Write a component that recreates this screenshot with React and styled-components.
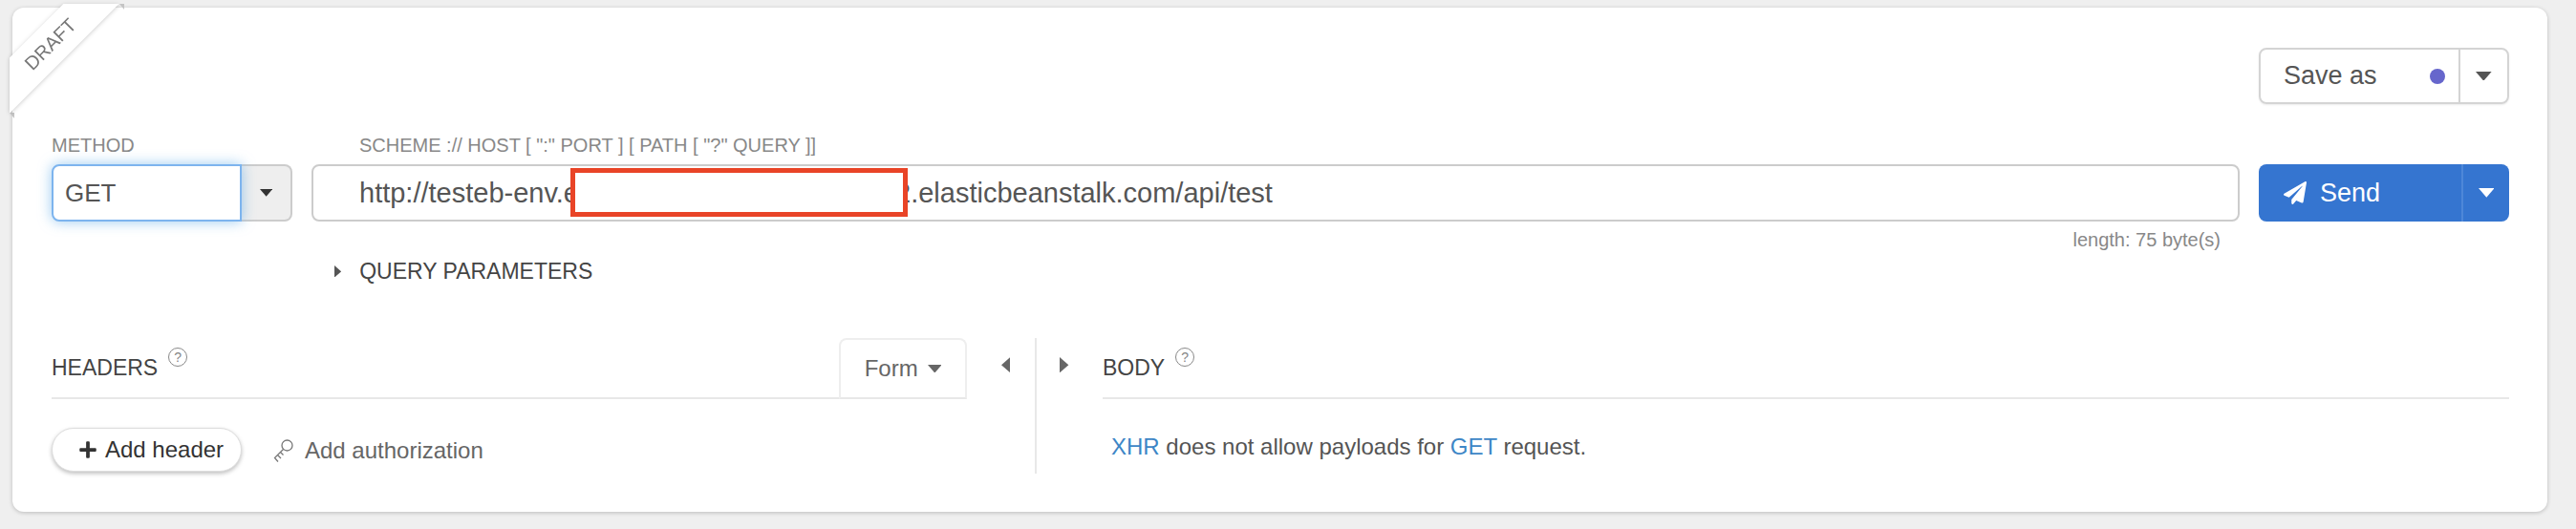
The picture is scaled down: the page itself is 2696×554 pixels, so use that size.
import React from "react";
import styled, { createGlobalStyle } from "styled-components";
import { FaPaperPlane, FaPlus } from "react-icons/fa";

const GlobalStyle = createGlobalStyle`
  html, body {
    margin: 0;
    padding: 0;
    background: #efefef;
    font-family: "Liberation Sans", Arial, sans-serif;
    color: #555;
  }
  * {
    box-sizing: border-box;
  }
`;

const Caret = ({ size = 12, color = "#555", dir = "down" }) => {
  const points = {
    down: "0,0 12,0 6,7",
    left: "8,0 8,14 0,7",
    right: "0,0 8,7 0,14",
  };
  const box = dir === "down" ? "0 0 12 7" : "0 0 8 14";
  const width = dir === "down" ? size * 1.33 : size * 0.72;
  const height = dir === "down" ? size * 0.78 : size * 1.26;
  return (
    <svg width={width} height={height} viewBox={box} style={{ display: "block" }}>
      <polygon points={points[dir]} fill={color} />
    </svg>
  );
};

const KeyIcon = () => (
  <svg width="21" height="25" viewBox="0 0 21 25" fill="none" stroke="#777" strokeWidth="1.3">
    <circle cx="14.5" cy="6.5" r="5.5" />
    <path d="M10.5 10.5 L1.5 19.5 L5 23.5 M4.5 16.5 L8 20 M7.5 13.5 L10.5 16.5" />
  </svg>
);

const HelpIcon = styled.span`
  display: inline-flex;
  align-items: center;
  justify-content: center;
  width: 20px;
  height: 20px;
  margin-left: 11px;
  border: 1px solid #888;
  border-radius: 50%;
  color: #888;
  font-size: 14px;
  line-height: 1;
  position: relative;
  top: -11px;
`;

const Page = styled.div`
  width: 2696px;
  height: 554px;
  padding: 8px 30px 18px 13px;
  overflow: hidden;
`;

const Card = styled.div`
  position: relative;
  height: 528px;
  padding: 42px 40px 0 41px;
  background: #fff;
  border-radius: 12px;
  box-shadow: 0 1px 4px rgba(0, 0, 0, 0.22);
`;

const Ribbon = styled.div`
  position: absolute;
  left: -3px;
  top: -4px;
  width: 122px;
  height: 122px;
  overflow: hidden;
  filter: drop-shadow(0 1px 2px rgba(0, 0, 0, 0.2));
`;

const RibbonBand = styled.div`
  position: absolute;
  left: -42px;
  top: 22px;
  width: 170px;
  height: 41px;
  background: #fff;
  transform: rotate(-45deg);
  display: flex;
  align-items: center;
  justify-content: center;
  font-size: 20px;
  color: #777;
`;

const RibbonFold = styled.div`
  position: absolute;
  left: ${(props) => props.$left}px;
  top: ${(props) => props.$top}px;
  width: 5px;
  height: 6px;
  background: #c4c4c4;
  clip-path: polygon(0 0, 100% 0, 100% 100%);
`;

const SaveRow = styled.div`
  display: flex;
  justify-content: flex-end;
  height: 59px;
`;

const SaveGroup = styled.div`
  display: flex;
  width: 262px;
  height: 59px;
  border: 2px solid #d4d4d4;
  border-radius: 8px;
  box-shadow: 0 1px 2px rgba(0, 0, 0, 0.08);
`;

const SaveMain = styled.div`
  flex: 1;
  display: flex;
  align-items: center;
  justify-content: space-between;
  padding: 0 14px 0 24px;
  font-size: 27px;
  color: #555;
  border-right: 2px solid #d4d4d4;
`;

const Dot = styled.span`
  width: 16px;
  height: 16px;
  border-radius: 50%;
  background: #6666cc;
`;

const SaveCaret = styled.div`
  width: 49px;
  display: flex;
  align-items: center;
  justify-content: center;
`;

const RequestGrid = styled.div`
  display: grid;
  grid-template-columns: 252px 1fr 262px;
  column-gap: 20px;
  margin-top: 33px;
`;

const FieldLabel = styled.div`
  height: 30px;
  font-size: 20px;
  line-height: 20px;
  color: #888;
  padding-left: ${(props) => props.$inset || 0}px;
`;

const MethodGroup = styled.div`
  display: flex;
  height: 60px;
`;

const MethodInput = styled.div`
  position: relative;
  width: 199px;
  display: flex;
  align-items: center;
  padding-left: 12px;
  font-size: 26px;
  color: #555;
  background: #fff;
  border: 2px solid #7db4ee;
  border-radius: 8px 0 0 8px;
  box-shadow: 0 0 14px rgba(102, 175, 233, 0.65);
`;

const MethodCaret = styled.div`
  flex: 1;
  display: flex;
  align-items: center;
  justify-content: center;
  background: #eee;
  border: 2px solid #ccc;
  border-left: 0;
  border-radius: 0 8px 8px 0;
`;

const UrlField = styled.div`
  position: relative;
  height: 60px;
  display: flex;
  align-items: center;
  padding-left: 48px;
  font-size: 29px;
  color: #555;
  border: 2px solid #ccc;
  border-radius: 8px;
  white-space: pre;
`;

const UrlGap = styled.span`
  display: inline-block;
  width: 331px;
`;

const Redaction = styled.div`
  position: absolute;
  left: 269px;
  top: 2px;
  width: 353px;
  height: 51px;
  background: #fff;
  border: 5px solid #e94427;
`;

const SendGroup = styled.div`
  display: flex;
  height: 60px;
  background: #3575d0;
  border-radius: 8px;
  color: #fff;
`;

const SendMain = styled.div`
  flex: 1;
  display: flex;
  align-items: center;
  gap: 14px;
  padding-left: 26px;
  font-size: 27px;
  border-right: 2px solid #4d87d8;
`;

const SendCaret = styled.div`
  width: 48px;
  display: flex;
  align-items: center;
  justify-content: center;
`;

const LengthNote = styled.div`
  grid-column: 2;
  text-align: right;
  padding: 8px 20px 0 0;
  height: 28px;
  font-size: 20px;
  line-height: 22px;
  color: #888;
`;

const QueryToggle = styled.div`
  display: flex;
  align-items: center;
  gap: 19px;
  height: 30px;
  margin: 9px 0 0 296px;
  font-size: 23px;
  color: #444;
`;

const Panels = styled.div`
  display: grid;
  grid-template-columns: 1031px 1fr;
  margin-top: 55px;
`;

const LeftPanel = styled.div`
  height: 142px;
  border-right: 2px solid #e8e8e8;
`;

const RightPanel = styled.div`
  display: grid;
  grid-template-columns: 69px 1fr;
`;

const PanelHead = styled.div`
  display: flex;
  align-items: stretch;
  height: 64px;
`;

const HeadTitle = styled.div`
  flex: 1;
  display: flex;
  align-items: center;
  font-size: 23px;
  color: #444;
  border-bottom: 2px solid #e8e8e8;
`;

const FormTab = styled.div`
  width: 134px;
  display: flex;
  align-items: center;
  justify-content: center;
  gap: 10px;
  font-size: 24px;
  color: #666;
  border: 2px solid #eee;
  border-bottom: 2px solid #e8e8e8;
  border-radius: 8px 8px 0 0;
`;

const CollapseSlot = styled.div`
  width: ${(props) => props.$width}px;
  display: flex;
  justify-content: center;
  padding: 20px 0 0 ${(props) => props.$shift || 0}px;
`;

const HeaderActions = styled.div`
  display: flex;
  align-items: center;
  gap: 33px;
  margin-top: 30px;
`;

const AddHeader = styled.div`
  display: flex;
  align-items: center;
  gap: 8px;
  width: 199px;
  height: 46px;
  padding-left: 27px;
  font-size: 24px;
  color: #333;
  background: #fff;
  border: 1px solid #ddd;
  border-radius: 23px;
  box-shadow: 0 2px 4px rgba(0, 0, 0, 0.25);
`;

const AddAuth = styled.div`
  display: flex;
  align-items: center;
  gap: 12px;
  padding-top: 2px;
  font-size: 24px;
  color: #666;
`;

const BodyNote = styled.div`
  margin: 36px 0 0 9px;
  font-size: 24px;
  line-height: 28px;
  color: #555;
`;

const Keyword = styled.span`
  color: #3d86c6;
`;

export default function App() {
  return (
    <>
      <GlobalStyle />
      <Page>
        <Card>
          <RibbonFold $left={112} $top={-4} />
          <RibbonFold $left={-3} $top={110} />
          <Ribbon>
            <RibbonBand>DRAFT</RibbonBand>
          </Ribbon>

          <SaveRow>
            <SaveGroup>
              <SaveMain>
                Save as
                <Dot />
              </SaveMain>
              <SaveCaret>
                <Caret size={12.5} />
              </SaveCaret>
            </SaveGroup>
          </SaveRow>

          <RequestGrid>
            <div>
              <FieldLabel>METHOD</FieldLabel>
              <MethodGroup>
                <MethodInput>GET</MethodInput>
                <MethodCaret>
                  <Caret size={10} color="#333" />
                </MethodCaret>
              </MethodGroup>
            </div>
            <div>
              <FieldLabel $inset={50}>SCHEME :// HOST [ ":" PORT ] [ PATH [ "?" QUERY ]]</FieldLabel>
              <UrlField>
                http://testeb-env.e
                <UrlGap />
                2.elasticbeanstalk.com/api/test
                <Redaction />
              </UrlField>
            </div>
            <div>
              <FieldLabel />
              <SendGroup>
                <SendMain>
                  <FaPaperPlane size={24} />
                  Send
                </SendMain>
                <SendCaret>
                  <Caret size={12.5} color="#fff" />
                </SendCaret>
              </SendGroup>
            </div>
            <LengthNote>length: 75 byte(s)</LengthNote>
          </RequestGrid>

          <QueryToggle>
            <Caret size={10} dir="right" color="#555" />
            QUERY PARAMETERS
          </QueryToggle>

          <Panels>
            <LeftPanel>
              <PanelHead>
                <HeadTitle>
                  HEADERS
                  <HelpIcon>?</HelpIcon>
                </HeadTitle>
                <FormTab>
                  Form
                  <Caret size={11} color="#666" />
                </FormTab>
                <CollapseSlot $width={71} $shift={10}>
                  <Caret size={13} dir="left" color="#666" />
                </CollapseSlot>
              </PanelHead>
              <HeaderActions>
                <AddHeader>
                  <FaPlus size={20} />
                  Add header
                </AddHeader>
                <AddAuth>
                  <KeyIcon />
                  Add authorization
                </AddAuth>
              </HeaderActions>
            </LeftPanel>
            <RightPanel>
              <CollapseSlot $width={58}>
                <Caret size={13} dir="right" color="#666" />
              </CollapseSlot>
              <div>
                <PanelHead>
                  <HeadTitle>
                    BODY
                    <HelpIcon>?</HelpIcon>
                  </HeadTitle>
                </PanelHead>
                <BodyNote>
                  <Keyword>XHR</Keyword> does not allow payloads for <Keyword>GET</Keyword> request.
                </BodyNote>
              </div>
            </RightPanel>
          </Panels>
        </Card>
      </Page>
    </>
  );
}
